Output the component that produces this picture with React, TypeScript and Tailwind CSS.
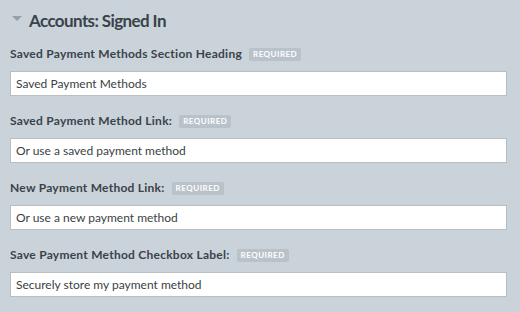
const fields = [
  { label: "Saved Payment Methods Section Heading", value: "Saved Payment Methods" },
  { label: "Saved Payment Method Link:", value: "Or use a saved payment method" },
  { label: "New Payment Method Link:", value: "Or use a new payment method" },
  { label: "Save Payment Method Checkbox Label:", value: "Securely store my payment method" },
];

const App = () => {
  return (
    <div className="h-[312px] w-[520px] overflow-hidden bg-[#c9d3d9] pl-[10px] pr-[13px] pt-[8px] font-['Lato',sans-serif]">
      <div className="flex h-[24px] items-center gap-[7px]">
        <span className="ml-[2px] mt-[-3px] h-0 w-0 border-x-[5px] border-t-[5px] border-x-transparent border-t-[#959fa7]" />
        <h1 className="text-[17px] font-bold leading-none tracking-[-0.6px] text-[#3b424a]">Accounts: Signed In</h1>
      </div>
      <div className="mt-[15px] flex flex-col gap-[18px]">
        {fields.map((f) => (
          <div key={f.label}>
            <div className="flex h-[14px] items-center gap-[7px]">
              <span className="text-[12px] font-bold leading-none tracking-[0.25px] text-[#3b424a]">{f.label}</span>
              <span className="rounded-[2px] bg-[#b9c2c9] px-[4px] py-[2px] text-[8px] font-bold leading-[9px] tracking-[0.5px] text-white">
                REQUIRED
              </span>
            </div>
            <input
              readOnly
              value={f.value}
              className="mt-[10px] block h-[25px] w-full border border-[#b7bfc5] bg-white px-[5px] text-[12px] text-[#3a3f44] outline-none"
            />
          </div>
        ))}
      </div>
    </div>
  );
};

export default App;
